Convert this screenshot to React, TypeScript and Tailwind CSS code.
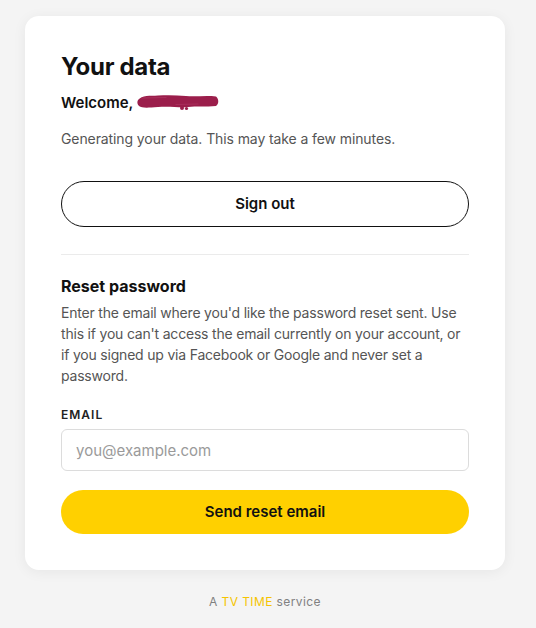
import React from "react";

function Redaction() {
  return (
    <svg width="84" height="18" viewBox="0 0 84 18" className="ml-[3px] inline-block align-middle -mt-[3px]">
      <path
        d="M2 7 C6 2, 14 3, 22 2.5 S40 2, 50 3 S70 2, 80 3.5 C83 6, 83 11, 80 13 C70 14, 60 13, 52 14 S34 13, 22 14 S6 15, 3 13 C1 11, 1 9, 2 7 Z"
        fill="#9b1e4b"
      />
      <path d="M6 5 L30 4.5 M40 11.5 L62 11" stroke="#b23a66" strokeWidth="1.2" strokeLinecap="round" opacity="0.6" />
      <circle cx="46" cy="15" r="2" fill="#9b1e4b" />
      <circle cx="50.5" cy="15.5" r="1.6" fill="#9b1e4b" />
    </svg>
  );
}

export default function App() {
  return (
    <div
      className="min-h-[628px] bg-[#f4f4f4] pt-4 text-[#111]"
      style={{ fontFamily: "Inter, 'Liberation Sans', sans-serif" }}
    >
      <div className="ml-[25px] w-[480px] rounded-[14px] bg-white px-9 pt-[36px] pb-9 shadow-[0_2px_14px_rgba(0,0,0,0.06)]">
        <h1 className="text-[24px] font-bold leading-[30px] tracking-[-0.3px] text-[#111]">Your data</h1>
        <p className="mt-[11px] text-[15px] font-semibold leading-[20px] text-[#111]">
          Welcome,
          <Redaction />
        </p>
        <p className="mt-[16px] text-[14px] leading-[20px] tracking-[-0.1px] text-[#555]">
          Generating your data. This may take a few minutes.
        </p>
        <button className="mt-[32px] flex h-[46px] w-full items-center justify-center rounded-full border border-[#111] bg-white text-[15px] font-semibold text-[#111]">
          Sign out
        </button>
        <div className="mt-[27px] h-px w-full bg-[#ebebeb]" />
        <h2 className="mt-[20px] text-[16px] font-bold leading-[22px] text-[#111]">Reset password</h2>
        <p className="mt-[5px] text-[14px] leading-[21px] tracking-[-0.2px] text-[#555]">
          Enter the email where you'd like the password reset sent. Use this if you can't access the email
          currently on your account, or if you signed up via Facebook or Google and never set a password.
        </p>
        <label className="mt-[21px] block text-[12px] font-semibold uppercase leading-[16px] tracking-[1px] text-[#222]">
          Email
        </label>
        <input
          type="email"
          placeholder="you@example.com"
          className="mt-[6px] h-[42px] w-full rounded-[6px] border border-[#dcdcdc] px-[14px] text-[15px] text-[#111] outline-none placeholder:text-[#9a9a9a]"
        />
        <button className="mt-[19px] flex h-[44px] w-full items-center justify-center rounded-full bg-[#ffd000] text-[15px] font-semibold text-[#111]">
          Send reset email
        </button>
      </div>
      <p className="ml-[25px] mt-[23px] w-[480px] text-center text-[12px] tracking-[0.4px] text-[#808080]">
        A <span className="text-[#f5c400]">TV TIME</span> service
      </p>
    </div>
  );
}
